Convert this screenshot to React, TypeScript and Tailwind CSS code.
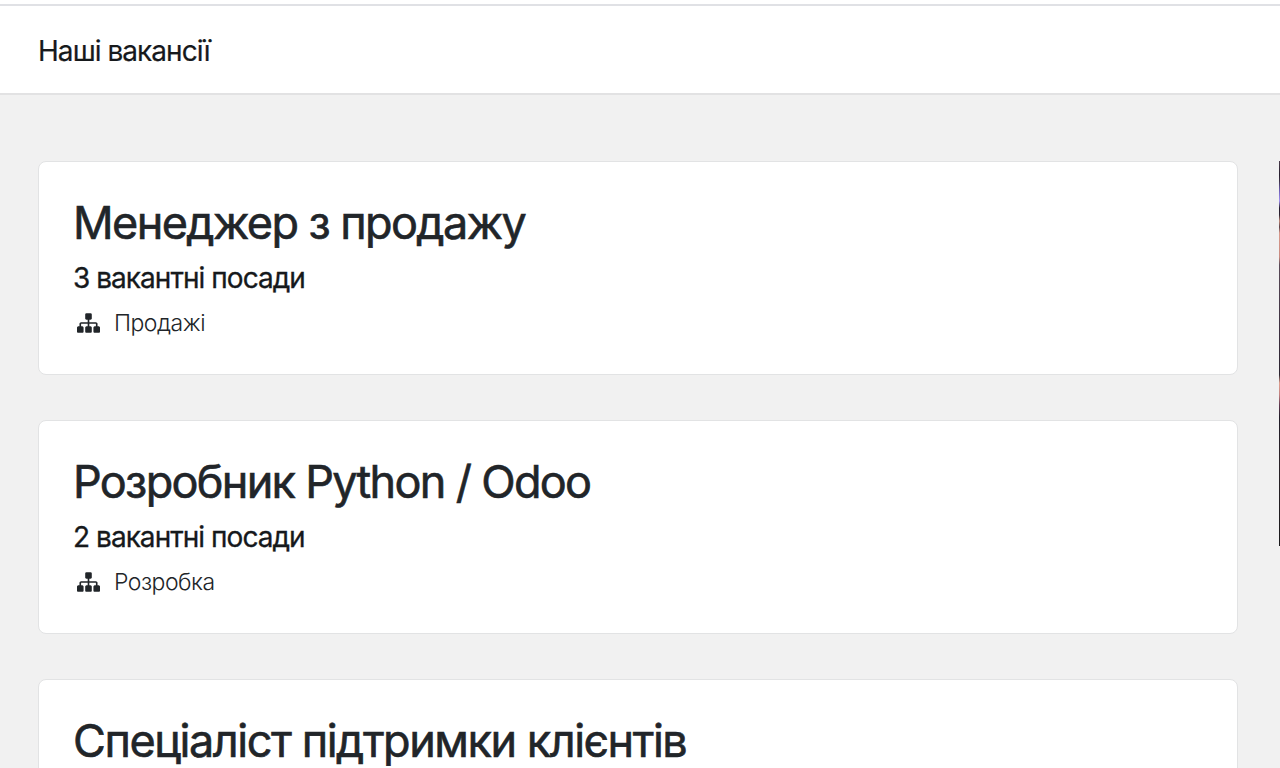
interface Job {
  title: string;
  tracking: string;
  openings: string;
  department: string;
}

const jobs: Job[] = [
  { title: 'Менеджер з продажу', tracking: 'tracking-[-1.6px]', openings: '3 вакантні посади', department: 'Продажі' },
  { title: 'Розробник Python / Odoo', tracking: 'tracking-[-1.69px]', openings: '2 вакантні посади', department: 'Розробка' },
  { title: 'Спеціаліст підтримки клієнтів', tracking: 'tracking-[-1.46px]', openings: '', department: '' },
];

function SitemapIcon() {
  return (
    <svg viewBox="0 128 1792 1536" className="h-[20px] w-[23px] shrink-0" fill="currentColor">
      <path d="M1792 1248v320q0 40-28 68t-68 28h-320q-40 0-68-28t-28-68v-320q0-40 28-68t68-28h96v-192h-512v192h96q40 0 68 28t28 68v320q0 40-28 68t-68 28h-320q-40 0-68-28t-28-68v-320q0-40 28-68t68-28h96v-192h-512v192h96q40 0 68 28t28 68v320q0 40-28 68t-68 28h-320q-40 0-68-28t-28-68v-320q0-40 28-68t68-28h96v-192q0-52 38-90t90-38h512v-192h-96q-40 0-68-28t-28-68v-320q0-40 28-68t68-28h320q40 0 68 28t28 68v320q0 40-28 68t-68 28h-96v192h512q52 0 90 38t38 90v192h96q40 0 68 28t28 68z" />
    </svg>
  );
}

function JobCard({ job }: { job: Job }) {
  return (
    <a className="block h-[214px] shrink-0 rounded-lg border border-[#e2e3e4] bg-white px-[34px] pt-[34px]">
      <h3 className={`whitespace-nowrap text-[45px] leading-[54px] font-normal [-webkit-text-stroke:0.6px] ${job.tracking}`}>
        {job.title}
      </h3>
      {job.openings && (
        <h5 className="mt-[13px] whitespace-nowrap text-[28px] leading-[30px] font-normal tracking-[-0.96px] text-[#16191c] [-webkit-text-stroke:0.3px]">
          {job.openings}
        </h5>
      )}
      {job.department && (
        <div className="mt-[14px] flex items-center gap-[14px] pl-[4px] text-[23px] leading-[32px] font-light tracking-[-0.5px]">
          <SitemapIcon />
          <span>{job.department}</span>
        </div>
      )}
    </a>
  );
}

export default function App() {
  return (
    <div className="flex h-screen flex-col overflow-hidden bg-[#f1f1f1] font-['Inter',sans-serif] text-[#212529]">
      <div className="h-[6px] shrink-0 border-b-2 border-[#e0e1e5] bg-white" />
      <header className="flex h-[89px] shrink-0 items-center border-b-2 border-[#e2e2e3] bg-white px-[38px] pt-[2px]">
        <h1 className="text-[28px] leading-[34px] font-normal tracking-[-0.95px] text-[#16191c] [-webkit-text-stroke:0.2px]">Наші вакансії</h1>
      </header>
      <main className="flex min-h-0 flex-1 items-start gap-[41px] pt-[66px] pl-[38px]">
        <div className="flex w-[1200px] shrink-0 flex-col gap-[45px]">
          {jobs.map((job) => (
            <JobCard key={job.title} job={job} />
          ))}
        </div>
        <aside className="h-[385px] w-px bg-[linear-gradient(#4a3c4c_0px,#241c2c_14px,#3c3046_20px,#7060b8_30px,#a090f0_40px,#241c2c_47px,#2c2030_54px,#c08878_60px,#5a4048_66px,#d89a8c_72px,#c88a80_96px,#5a4a58_104px,#3c3040_170px,#2c2430_214px,#e0a090_222px,#c08080_234px,#603850_244px,#201c28_256px,#2a2228_300px,#1a1a1c_385px)]" />
      </main>
    </div>
  );
}
